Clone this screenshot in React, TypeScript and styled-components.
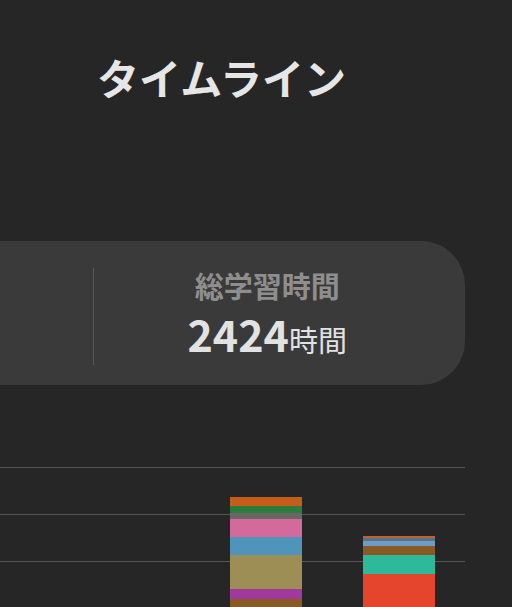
import React from 'react';
import styled, { createGlobalStyle } from 'styled-components';

const GlobalStyle = createGlobalStyle`
    html, body {
        margin: 0;
        padding: 0;
        background-color: #262626;
        overflow: hidden;
    }
    body {
        font-family: "Noto Sans CJK JP", "Noto Sans", sans-serif;
    }
`;

const Page = styled.div`
    width: 512px;
    height: 607px;
    overflow: hidden;
    background-color: #262626;
`;

const Header = styled.header`
    box-sizing: border-box;
    height: 241px;
    padding: 47px 0 0 97px;
`;

const Title = styled.h1`
    margin: 0;
    font-size: 42px;
    font-weight: 700;
    line-height: 60px;
    color: #e6e6e6;
`;

const Content = styled.div`
    width: 744px;
    margin-left: -279px;
`;

const Card = styled.section`
    box-sizing: border-box;
    height: 144px;
    padding: 24px;
    display: grid;
    grid-template-columns: 1fr 1px 1fr;
    align-items: center;
    background-color: #3a3a3a;
    border-radius: 44px;
`;

const Divider = styled.div`
    width: 1px;
    height: 97px;
    background-color: #575757;
`;

const Stat = styled.div`
    display: flex;
    flex-direction: column;
    align-items: center;
`;

const StatLabel = styled.div`
    font-size: 29px;
    font-weight: 700;
    line-height: 40px;
    color: #8e8e8e;
`;

const StatValue = styled.div`
    display: flex;
    align-items: baseline;
    line-height: 56px;
    color: #e2e2e2;
`;

const Number = styled.span`
    font-size: 43px;
    font-weight: 700;
`;

const Unit = styled.span`
    font-size: 29px;
    font-weight: 400;
`;

const Chart = styled.div`
    height: 188px;
    margin-top: 82px;
    width: 744px;
    display: flex;
    justify-content: flex-end;
    align-items: flex-end;
    background-image: repeating-linear-gradient(
        to bottom,
        #555 0,
        #555 1px,
        transparent 1px,
        transparent 47px
    );
`;

const Slot = styled.div`
    width: 133px;
    height: 100%;
    display: flex;
    justify-content: center;
    align-items: flex-end;
`;

const Bar = styled.div`
    width: 72px;
    display: flex;
    flex-direction: column;
`;

const Segment = styled.div<{ $color: string; $fill?: boolean }>`
    background-color: ${p => p.$color};
    flex: ${p => (p.$fill ? 1 : 'none')};
`;

type Seg = { color: string; size: number };

const bars: { total: number; segments: Seg[] }[] = [
    { total: 0, segments: [] },
    { total: 0, segments: [] },
    { total: 0, segments: [] },
    {
        total: 158,
        segments: [
            { color: '#c45c1a', size: 9 },
            { color: '#2b7d3e', size: 7 },
            { color: '#6b6566', size: 6 },
            { color: '#d36a9b', size: 18 },
            { color: '#4f94ba', size: 18 },
            { color: '#9c8e55', size: 34 },
            { color: '#a13a9c', size: 10 },
            { color: '#8a5a24', size: 0 },
        ],
    },
    {
        total: 119,
        segments: [
            { color: '#c0602a', size: 2 },
            { color: '#5b7089', size: 3 },
            { color: '#6d9dc5', size: 5 },
            { color: '#8a5a24', size: 9 },
            { color: '#2fb99b', size: 19 },
            { color: '#e4452c', size: 0 },
        ],
    },
];

export default function App() {
    return (
        <Page>
            <GlobalStyle />
            <Header>
                <Title>タイムライン</Title>
            </Header>

            <Content>
                <Card>
                    <Stat />
                    <Divider />
                    <Stat>
                        <StatLabel>総学習時間</StatLabel>
                        <StatValue>
                            <Number>2424</Number>
                            <Unit>時間</Unit>
                        </StatValue>
                    </Stat>
                </Card>

                <Chart>
                    {bars.map((bar, i) => (
                        <Slot key={i}>
                            <Bar style={{ height: bar.total }}>
                                {bar.segments.map((s, j) => (
                                    <Segment
                                        key={j}
                                        $color={s.color}
                                        $fill={s.size === 0}
                                        style={s.size ? { height: s.size } : undefined}
                                    />
                                ))}
                            </Bar>
                        </Slot>
                    ))}
                </Chart>
            </Content>
        </Page>
    );
}
